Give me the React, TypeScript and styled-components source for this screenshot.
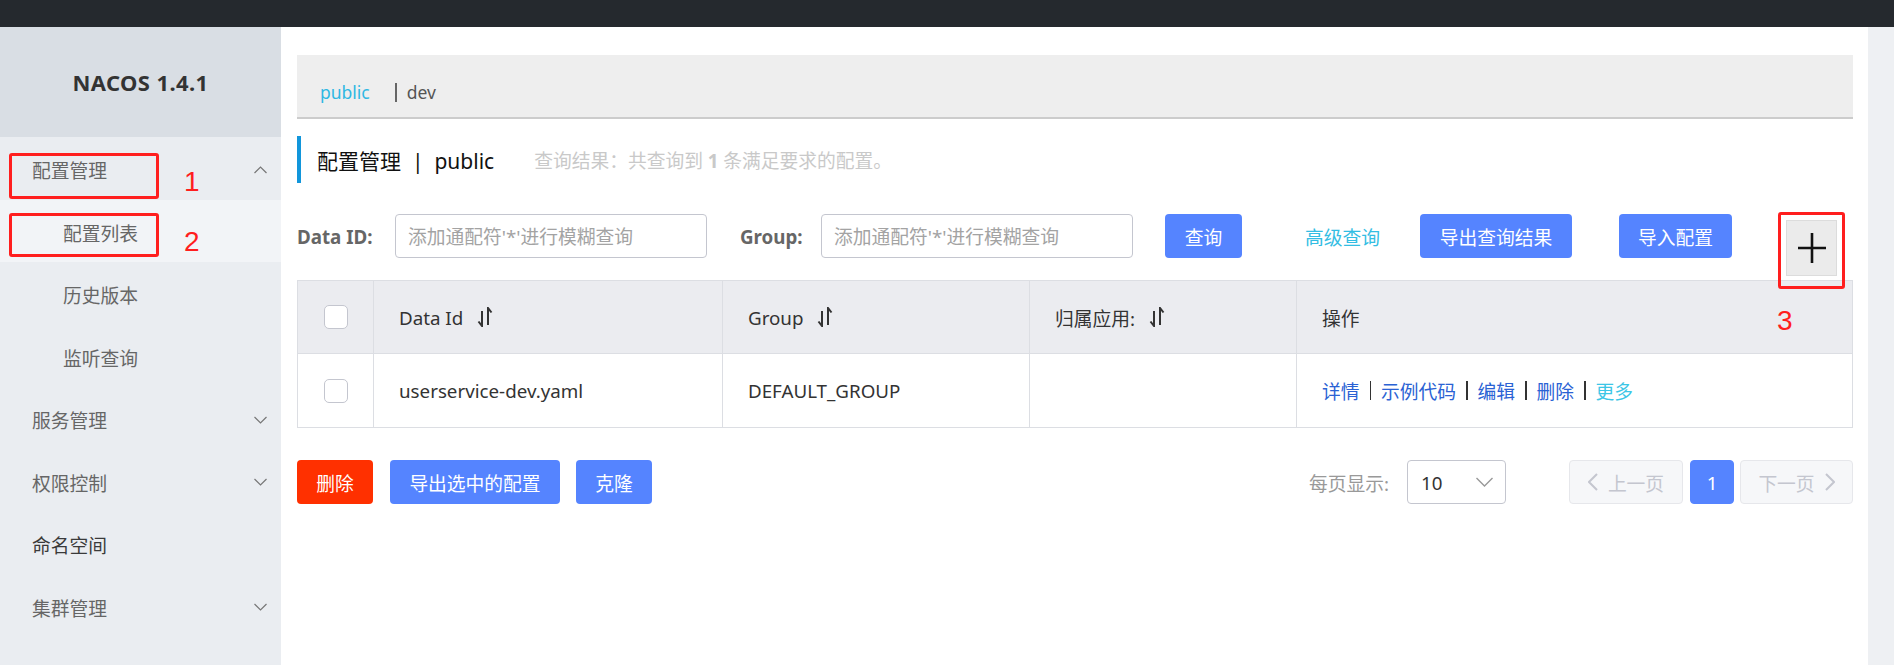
import React from "react";
import styled, { createGlobalStyle } from "styled-components";

const GlobalStyle = createGlobalStyle`
  html, body { margin: 0; padding: 0; background: #fff; }
  body { font-family: "Noto Sans", "Noto Sans CJK SC", sans-serif; color: #333; }
  * { box-sizing: border-box; }
  input::placeholder { color: #a3a3a3; }
`;

const Page = styled.div`
  width: 1894px;
  height: 665px;
  display: flex;
  flex-direction: column;
  overflow: hidden;
  position: relative;
`;

const TopBar = styled.div`
  height: 27px;
  flex: none;
  background: #25292e;
`;

const Body = styled.div`
  display: flex;
  flex: 1;
  min-height: 0;
`;

const Sidebar = styled.aside`
  width: 281px;
  flex: none;
  background: #eaedf1;
`;

const Logo = styled.div`
  height: 110px;
  background: #d9dee4;
  display: flex;
  align-items: center;
  justify-content: center;
  font-weight: 700;
  font-size: 22px;
  letter-spacing: 0.4px;
  color: #333;
`;

const MenuItem = styled.div<{ $sub?: boolean; $active?: boolean; $dark?: boolean }>`
  height: 62.5px;
  display: flex;
  align-items: center;
  justify-content: space-between;
  padding-left: ${(p) => (p.$sub ? 63 : 32)}px;
  padding-right: 14px;
  padding-top: 3px;
  font-size: 18.75px;
  color: ${(p) => (p.$dark ? "#3a3a3a" : "#666")};
  background: ${(p) => (p.$active ? "#f2f4f7" : "transparent")};
`;

const Main = styled.main`
  flex: 1;
  min-width: 0;
  padding: 28px 15px 0 16px;
`;

const ScrollTrack = styled.div`
  width: 26px;
  flex: none;
  background: #eef0f3;
`;

const TabBar = styled.div`
  height: 64px;
  background: #eeeeee;
  border-bottom: 2px solid #cccccc;
  display: flex;
  align-items: center;
  padding: 12px 0 0 23px;
  font-size: 17.5px;
`;

const Tab = styled.span<{ $active?: boolean }>`
  color: ${(p) => (p.$active ? "#2fb8e3" : "#555")};
`;

const TabSep = styled.span`
  display: inline-block;
  width: 2px;
  height: 19px;
  background: #666;
  margin: 0 10px 0 25px;
`;

const TitleBar = styled.div`
  margin-top: 17px;
  height: 47px;
  border-left: 4px solid #1296db;
  padding-left: 16px;
  display: flex;
  align-items: center;
`;

const TitleText = styled.span`
  font-size: 21px;
  color: #111;
  white-space: pre;
`;

const ResultText = styled.span`
  margin-left: 40px;
  font-size: 18.75px;
  color: #c9c9c9;
  white-space: pre;
  b {
    font-weight: 700;
  }
`;

const SearchRow = styled.div`
  margin-top: 31px;
  display: flex;
  align-items: flex-start;
`;

const FieldLabel = styled.label<{ $w: number; $ml?: number }>`
  width: ${(p) => p.$w}px;
  margin-left: ${(p) => p.$ml ?? 0}px;
  height: 44px;
  display: flex;
  align-items: center;
  font-size: 18.75px;
  font-weight: 700;
  color: #666;
  flex: none;
  white-space: nowrap;
`;

const TextInput = styled.input`
  width: 312px;
  height: 44px;
  flex: none;
  border: 1px solid #c4c6cf;
  border-radius: 4px;
  padding: 0 12px;
  font-family: inherit;
  font-size: 18.75px;
  color: #333;
  outline: none;
  background: #fff;
`;

const Btn = styled.button<{ $w: number; $ml?: number; $danger?: boolean }>`
  width: ${(p) => p.$w}px;
  margin-left: ${(p) => p.$ml ?? 0}px;
  height: 44px;
  flex: none;
  border: none;
  border-radius: 4px;
  background: ${(p) => (p.$danger ? "#ff3000" : "#5584ff")};
  color: #fff;
  font-family: inherit;
  font-size: 18.75px;
  padding: 0;
  display: flex;
  align-items: center;
  justify-content: center;
  white-space: nowrap;
`;

const TextLink = styled.a<{ $ml: number; $mr: number }>`
  margin-left: ${(p) => p.$ml}px;
  margin-right: ${(p) => p.$mr}px;
  height: 44px;
  display: flex;
  align-items: center;
  font-size: 18.75px;
  color: #33bde3;
  white-space: nowrap;
  flex: none;
`;

const AddBtn = styled.button`
  margin-left: 54px;
  margin-top: 6px;
  width: 51px;
  height: 56px;
  flex: none;
  background: #ebebeb;
  border: 1px solid #dcdcdc;
  padding: 0;
  display: flex;
  align-items: center;
  justify-content: center;
`;

const Table = styled.div`
  margin-top: 4px;
  display: grid;
  grid-template-columns: 76px 349px 307px 267px 1fr;
  grid-template-rows: 73px 74px;
  border-top: 1px solid #dcdee3;
  border-left: 1px solid #dcdee3;
`;

const Cell = styled.div<{ $head?: boolean; $center?: boolean }>`
  border-right: 1px solid #dcdee3;
  border-bottom: 1px solid #dcdee3;
  background: ${(p) => (p.$head ? "#ebecf0" : "#fff")};
  display: flex;
  align-items: center;
  justify-content: ${(p) => (p.$center ? "center" : "flex-start")};
  padding-left: ${(p) => (p.$center ? 0 : 25)}px;
  font-size: 18.75px;
  color: #333;
  white-space: nowrap;
`;

const CheckBox = styled.span`
  display: block;
  width: 24px;
  height: 24px;
  border: 1px solid #c4c6cf;
  border-radius: 5px;
  background: #fff;
  margin-left: 1px;
`;

const SortIcon = styled.svg`
  margin-left: 14px;
  flex: none;
`;

const OpLink = styled.span<{ $more?: boolean }>`
  color: ${(p) => (p.$more ? "#3cc6e6" : "#2a62d4")};
`;

const OpSep = styled.span`
  display: inline-block;
  width: 1.5px;
  height: 19px;
  background: #333;
  margin: 0 10px;
  vertical-align: -3px;
`;

const BottomRow = styled.div`
  margin-top: 32px;
  display: flex;
  align-items: center;
  height: 44px;
`;

const Spacer = styled.div`
  flex: 1;
`;

const PageSizeLabel = styled.span`
  font-size: 18.75px;
  color: #999;
  margin-right: 18px;
`;

const Select = styled.div`
  width: 99px;
  height: 44px;
  border: 1px solid #c4c6cf;
  border-radius: 4px;
  display: flex;
  align-items: center;
  justify-content: space-between;
  padding: 0 12px 0 13px;
  font-size: 18.75px;
  color: #333;
`;

const PagerBtn = styled.div<{ $w: number; $ml: number; $current?: boolean }>`
  width: ${(p) => p.$w}px;
  margin-left: ${(p) => p.$ml}px;
  height: 44px;
  border-radius: 4px;
  border: 1px solid ${(p) => (p.$current ? "#5584ff" : "#e6e7eb")};
  background: ${(p) => (p.$current ? "#5584ff" : "#f6f7f9")};
  color: ${(p) => (p.$current ? "#fff" : "#c4c6cf")};
  display: flex;
  align-items: center;
  justify-content: center;
  gap: 10px;
  font-size: 18.75px;
`;

const Mark = styled.div<{ $x: number; $y: number; $w: number; $h: number }>`
  position: absolute;
  left: ${(p) => p.$x}px;
  top: ${(p) => p.$y}px;
  width: ${(p) => p.$w}px;
  height: ${(p) => p.$h}px;
  border: 3px solid #ff1e1e;
  border-radius: 3px;
  pointer-events: none;
`;

const MarkNum = styled.span<{ $x: number; $y: number }>`
  position: absolute;
  left: ${(p) => p.$x}px;
  top: ${(p) => p.$y}px;
  font-family: "Liberation Sans", sans-serif;
  font-size: 28px;
  line-height: 28px;
  color: #ff1e1e;
`;

const Chevron = ({ up }: { up?: boolean }) => (
  <svg width="13" height="8" viewBox="0 0 13 8">
    <polyline
      points={up ? "0.5,7 6.5,1 12.5,7" : "0.5,1 6.5,7 12.5,1"}
      fill="none"
      stroke="#777"
      strokeWidth="1.2"
    />
  </svg>
);

const Sort = () => (
  <SortIcon width="16" height="20" viewBox="0 0 16 20">
    <path d="M5 4 V19 L1.5 14.5" fill="none" stroke="#333" strokeWidth="2" />
    <path d="M11 18 V1 L14.5 5.5" fill="none" stroke="#333" strokeWidth="2" />
  </SortIcon>
);

const menu = [
  { label: "配置管理", chevron: "up" },
  { label: "配置列表", sub: true, active: true },
  { label: "历史版本", sub: true },
  { label: "监听查询", sub: true },
  { label: "服务管理", chevron: "down" },
  { label: "权限控制", chevron: "down" },
  { label: "命名空间", dark: true },
  { label: "集群管理", chevron: "down" },
];

export default function App() {
  return (
    <Page>
      <GlobalStyle />
      <TopBar />
      <Body>
        <Sidebar>
          <Logo>NACOS 1.4.1</Logo>
          {menu.map((m) => (
            <MenuItem key={m.label} $sub={m.sub} $active={m.active} $dark={m.dark}>
              <span>{m.label}</span>
              {m.chevron && <Chevron up={m.chevron === "up"} />}
            </MenuItem>
          ))}
        </Sidebar>
        <Main>
          <TabBar>
            <Tab $active>public</Tab>
            <TabSep />
            <Tab>dev</Tab>
          </TabBar>
          <TitleBar>
            <TitleText>配置管理  |  public</TitleText>
            <ResultText>
              查询结果：共查询到 <b>1</b> 条满足要求的配置。
            </ResultText>
          </TitleBar>
          <SearchRow>
            <FieldLabel $w={98}>Data ID:</FieldLabel>
            <TextInput placeholder="添加通配符'*'进行模糊查询" />
            <FieldLabel $w={81} $ml={33}>Group:</FieldLabel>
            <TextInput placeholder="添加通配符'*'进行模糊查询" />
            <Btn $w={77} $ml={32}>查询</Btn>
            <TextLink $ml={63} $mr={40}>高级查询</TextLink>
            <Btn $w={152}>导出查询结果</Btn>
            <Btn $w={113} $ml={47}>导入配置</Btn>
            <AddBtn>
              <svg width="30" height="32" viewBox="0 0 30 32">
                <path d="M15 1 V31 M1 16 H29" stroke="#111" strokeWidth="2.6" fill="none" />
              </svg>
            </AddBtn>
          </SearchRow>
          <Table>
            <Cell $head $center>
              <CheckBox />
            </Cell>
            <Cell $head>
              Data Id
              <Sort />
            </Cell>
            <Cell $head>
              Group
              <Sort />
            </Cell>
            <Cell $head>
              归属应用:
              <Sort />
            </Cell>
            <Cell $head>操作</Cell>
            <Cell $center>
              <CheckBox />
            </Cell>
            <Cell>userservice-dev.yaml</Cell>
            <Cell>DEFAULT_GROUP</Cell>
            <Cell />
            <Cell>
              <OpLink>详情</OpLink>
              <OpSep />
              <OpLink>示例代码</OpLink>
              <OpSep />
              <OpLink>编辑</OpLink>
              <OpSep />
              <OpLink>删除</OpLink>
              <OpSep />
              <OpLink $more>更多</OpLink>
            </Cell>
          </Table>
          <BottomRow>
            <Btn $w={76} $danger>删除</Btn>
            <Btn $w={170} $ml={17}>导出选中的配置</Btn>
            <Btn $w={76} $ml={16}>克隆</Btn>
            <Spacer />
            <PageSizeLabel>每页显示:</PageSizeLabel>
            <Select>
              <span>10</span>
              <svg width="17" height="10" viewBox="0 0 17 10">
                <polyline points="0.5,1 8.5,9 16.5,1" fill="none" stroke="#999" strokeWidth="1.4" />
              </svg>
            </Select>
            <PagerBtn $w={114} $ml={63}>
              <svg width="10" height="18" viewBox="0 0 10 18">
                <polyline points="9,1 1,9 9,17" fill="none" stroke="#c4c6cf" strokeWidth="2" />
              </svg>
              <span>上一页</span>
            </PagerBtn>
            <PagerBtn $w={44} $ml={7} $current>
              1
            </PagerBtn>
            <PagerBtn $w={113} $ml={6}>
              <span>下一页</span>
              <svg width="10" height="18" viewBox="0 0 10 18">
                <polyline points="1,1 9,9 1,17" fill="none" stroke="#c4c6cf" strokeWidth="2" />
              </svg>
            </PagerBtn>
          </BottomRow>
        </Main>
        <ScrollTrack />
      </Body>
      <Mark $x={9} $y={153} $w={150} $h={46} />
      <Mark $x={9} $y={213} $w={150} $h={44} />
      <Mark $x={1778} $y={212} $w={67} $h={77} />
      <MarkNum $x={184} $y={168}>1</MarkNum>
      <MarkNum $x={184} $y={228}>2</MarkNum>
      <MarkNum $x={1777} $y={307}>3</MarkNum>
    </Page>
  );
}
